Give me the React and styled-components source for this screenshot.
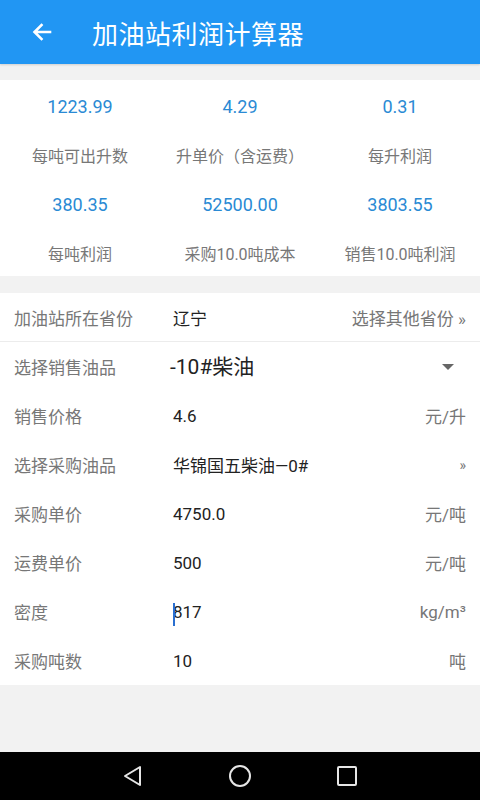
import React from "react";
import styled, { createGlobalStyle } from "styled-components";

const GlobalStyle = createGlobalStyle`
  html, body { margin: 0; padding: 0; background: #f2f2f2; }
  body { font-family: Roboto, "Noto Sans CJK SC", sans-serif; }
`;

const stats = [
  { value: "1223.99", label: "每吨可出升数" },
  { value: "4.29", label: "升单价（含运费）" },
  { value: "0.31", label: "每升利润" },
  { value: "380.35", label: "每吨利润" },
  { value: "52500.00", label: "采购10.0吨成本" },
  { value: "3803.55", label: "销售10.0吨利润" },
];

const rows = [
  { label: "销售价格", value: "4.6", unit: "元/升" },
  { label: "选择采购油品", value: "华锦国五柴油—0#", unit: "»", small: true },
  { label: "采购单价", value: "4750.0", unit: "元/吨" },
  { label: "运费单价", value: "500", unit: "元/吨" },
  { label: "密度", value: "817", unit: "kg/m³", cursor: true },
  { label: "采购吨数", value: "10", unit: "吨" },
];

const App = () => {
  return (
    <Page>
      <GlobalStyle />
      <Header>
        <svg width="24" height="24" viewBox="0 0 24 24">
          <path d="M20 12H5M11.5 5L4.5 12l7 7" fill="none" stroke="#fff" strokeWidth="2.6" strokeLinecap="square" />
        </svg>
        <Title>加油站利润计算器</Title>
      </Header>

      <StatsGrid>
        {stats.map((s) => (
          <Stat key={s.label}>
            <StatValue>{s.value}</StatValue>
            <StatLabel>{s.label}</StatLabel>
          </Stat>
        ))}
      </StatsGrid>

      <Form>
        <Row $divider>
          <Label>加油站所在省份</Label>
          <Value>辽宁</Value>
          <Unit>选择其他省份 »</Unit>
        </Row>
        <Row>
          <Label>选择销售油品</Label>
          <Value $big>-10#柴油</Value>
          <Caret viewBox="0 0 12 6" width="12" height="6">
            <path d="M0 0h12L6 6z" fill="#666" />
          </Caret>
        </Row>
        {rows.map((r) => (
          <Row key={r.label}>
            <Label>{r.label}</Label>
            <Value>
              {r.cursor && <Cursor />}
              {r.value}
            </Value>
            <Unit $small={r.small}>{r.unit}</Unit>
          </Row>
        ))}
      </Form>

      <Filler />

      <NavBar>
        <svg width="22" height="24" viewBox="0 0 22 24">
          <path d="M18 3v18L3 12z" fill="none" stroke="#e6e6e6" strokeWidth="2" strokeLinejoin="round" />
        </svg>
        <svg width="24" height="24" viewBox="0 0 24 24">
          <circle cx="12" cy="12" r="10" fill="none" stroke="#e6e6e6" strokeWidth="2" />
        </svg>
        <svg width="22" height="22" viewBox="0 0 22 22">
          <rect x="2" y="2" width="18" height="18" rx="1" fill="none" stroke="#e6e6e6" strokeWidth="2" />
        </svg>
      </NavBar>
    </Page>
  );
};

const Page = styled.div`
  display: flex;
  flex-direction: column;
  height: 800px;
  background: #f2f2f2;
`;

const Header = styled.div`
  height: 64px;
  flex-shrink: 0;
  background: #2196f3;
  display: flex;
  align-items: center;
  padding-left: 30px;
  box-shadow: 0 1px 2px rgba(0, 0, 0, 0.15);
`;

const Title = styled.div`
  margin-left: 38px;
  color: #fff;
  font-size: 26px;
  font-family: "Noto Sans CJK SC", sans-serif;
  letter-spacing: 0.5px;
`;

const StatsGrid = styled.div`
  margin-top: 16px;
  background: #fff;
  display: grid;
  grid-template-columns: repeat(3, 1fr);
  grid-auto-rows: 98px;
`;

const Stat = styled.div`
  display: flex;
  flex-direction: column;
  align-items: center;
  padding-top: 14px;
`;

const StatValue = styled.div`
  color: #2a8ad4;
  font-size: 18px;
  line-height: 26px;
`;

const StatLabel = styled.div`
  margin-top: 24px;
  color: #777;
  font-size: 16px;
  line-height: 26px;
`;

const Form = styled.div`
  margin-top: 17px;
  background: #fff;
`;

const Row = styled.div`
  height: ${(p) => (p.$divider ? 48 : 49)}px;
  display: flex;
  align-items: center;
  padding: 0 14px;
  border-bottom: ${(p) => (p.$divider ? "1px solid #ececec" : "none")};
`;

const Label = styled.div`
  width: 159px;
  flex-shrink: 0;
  color: #777;
  font-size: 17px;
  font-family: "Noto Sans CJK SC", sans-serif;
`;

const Value = styled.div`
  flex: 1;
  position: relative;
  color: #222;
  font-size: ${(p) => (p.$big ? 21 : 17)}px;
  margin-left: ${(p) => (p.$big ? -3 : 0)}px;
  margin-top: ${(p) => (p.$big ? -4 : 0)}px;
`;

const Cursor = styled.span`
  position: absolute;
  left: 0;
  top: 1px;
  width: 2px;
  height: 23px;
  background: #2a6fd0;
`;

const Unit = styled.div`
  color: #777;
  font-size: ${(p) => (p.$small ? 14 : 17)}px;
`;

const Caret = styled.svg`
  margin-right: 12px;
`;

const Filler = styled.div`
  flex: 1;
`;

const NavBar = styled.div`
  height: 48px;
  flex-shrink: 0;
  background: #000;
  display: flex;
  align-items: center;
  justify-content: center;
  gap: 84px;
`;

export default App;
